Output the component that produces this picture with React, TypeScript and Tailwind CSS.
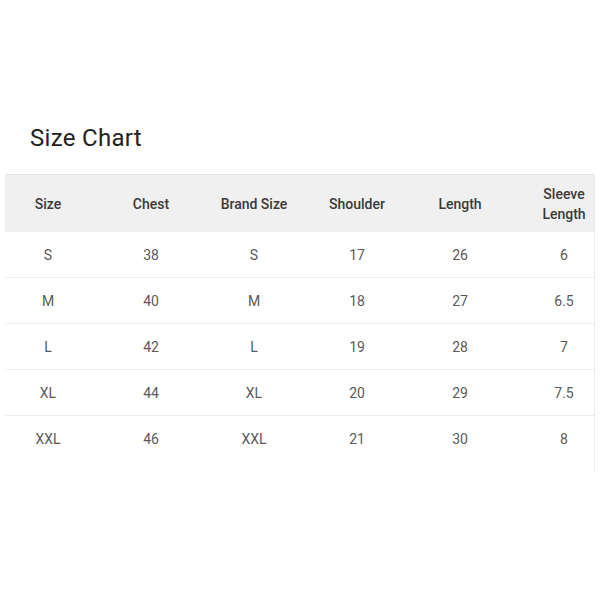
const headers = ["Size", "Chest", "Brand Size", "Shoulder", "Length", "Sleeve Length"]

const rows = [
  ["S", "38", "S", "17", "26", "6"],
  ["M", "40", "M", "18", "27", "6.5"],
  ["L", "42", "L", "19", "28", "7"],
  ["XL", "44", "XL", "20", "29", "7.5"],
  ["XXL", "46", "XXL", "21", "30", "8"],
]

// column widths picked so the cell centres line up with the picture
const widths = ["w-[86px]", "w-[120px]", "w-[86px]", "w-[120px]", "w-[86px]", "w-[91px] pl-[31px]"]

export default function App() {
  return (
    <div className="w-[600px] h-[600px] bg-white" style={{ fontFamily: "Roboto, 'Liberation Sans', sans-serif" }}>
      <div className="pt-[122px] pl-[30px] text-[24px] leading-[32px] tracking-[0.3px] text-[#222]">Size Chart</div>
      <div className="ml-[5px] mt-[20px] w-[590px] h-[299px] border-r border-[#ebebeb]">
        <div className="flex h-[58px] items-center bg-[#f0f0f0] border-t border-[#e8e8e8] text-[14px] leading-[20px] font-medium text-[#3a3a3a]">
          {headers.map((h, i) => (
            <div key={h} className={`${widths[i]} shrink-0 text-center`}>
              {h}
            </div>
          ))}
        </div>
        {rows.map((r, ri) => (
          <div
            key={ri}
            className={`flex h-[46px] items-center pt-px text-[14px] text-[#5a5a5a] ${ri < rows.length - 1 ? "border-b border-[#ececec]" : ""}`}
          >
            {r.map((c, i) => (
              <div key={i} className={`${widths[i]} shrink-0 text-center`}>
                {c}
              </div>
            ))}
          </div>
        ))}
      </div>
    </div>
  )
}
